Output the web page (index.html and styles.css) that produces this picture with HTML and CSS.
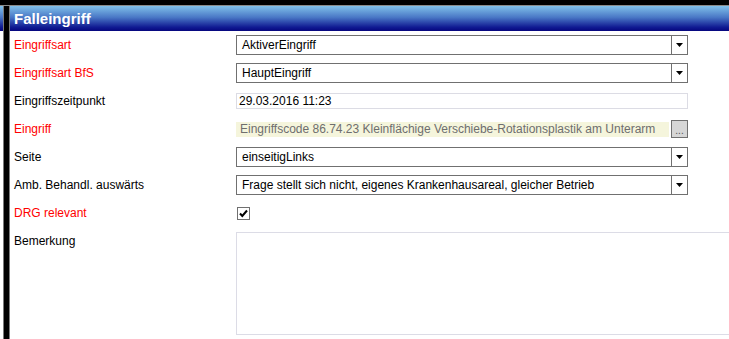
FILE: index.html
```html
<!DOCTYPE html>
<html lang="de">
<head>
  <meta charset="UTF-8">
  <title>Falleingriff</title>
  <link rel="stylesheet" href="styles.css">
</head>
<body>
<div class="topbar"></div>
<div class="layout">
  <div class="side">
    <div class="side-head"></div>
  </div>
  <div class="rule"></div>
  <div class="panel">
    <div class="panel-head">Falleingriff</div>
    <div class="form">
      <div class="row">
        <div class="label required">Eingriffsart</div>
        <div class="select">
          <span class="select-text">AktiverEingriff</span>
          <span class="select-arrow"><svg width="7" height="4" viewBox="0 0 7 4"><polygon points="0,0 7,0 3.5,4" fill="#000"/></svg></span>
        </div>
      </div>
      <div class="row">
        <div class="label required">Eingriffsart BfS</div>
        <div class="select">
          <span class="select-text">HauptEingriff</span>
          <span class="select-arrow"><svg width="7" height="4" viewBox="0 0 7 4"><polygon points="0,0 7,0 3.5,4" fill="#000"/></svg></span>
        </div>
      </div>
      <div class="row">
        <div class="label">Eingriffszeitpunkt</div>
        <div class="input">29.03.2016 11:23</div>
      </div>
      <div class="row">
        <div class="label required">Eingriff</div>
        <div class="lookup">
          <div class="lookup-text">Eingriffscode 86.74.23 Kleinflächige Verschiebe-Rotationsplastik am Unterarm</div>
          <button class="lookup-btn" type="button">...</button>
        </div>
      </div>
      <div class="row">
        <div class="label">Seite</div>
        <div class="select">
          <span class="select-text">einseitigLinks</span>
          <span class="select-arrow"><svg width="7" height="4" viewBox="0 0 7 4"><polygon points="0,0 7,0 3.5,4" fill="#000"/></svg></span>
        </div>
      </div>
      <div class="row">
        <div class="label">Amb. Behandl. auswärts</div>
        <div class="select">
          <span class="select-text">Frage stellt sich nicht, eigenes Krankenhausareal, gleicher Betrieb</span>
          <span class="select-arrow"><svg width="7" height="4" viewBox="0 0 7 4"><polygon points="0,0 7,0 3.5,4" fill="#000"/></svg></span>
        </div>
      </div>
      <div class="row">
        <div class="label required">DRG relevant</div>
        <div class="checkbox">
          <svg width="11" height="11" viewBox="0 0 11 11"><path d="M2 5.5 L4.3 8 L9 2.5" fill="none" stroke="#000" stroke-width="2"/></svg>
        </div>
      </div>
      <div class="row row-top">
        <div class="label">Bemerkung</div>
        <div class="textarea"></div>
      </div>
    </div>
  </div>
</div>
</body>
</html>
```

FILE: styles.css
```css
* {
  margin: 0;
  padding: 0;
  box-sizing: border-box;
}

body {
  font-family: 'Liberation Sans', Arial, sans-serif;
  font-size: 12px;
  color: #000;
  background: white;
  overflow: hidden;
}

.topbar {
  height: 6px;
  background: #000;
  border-bottom: 1px solid #8a8a8a;
}

.layout {
  display: flex;
  height: 333px;
}

.side {
  width: 3px;
}

.side-head,
.panel-head {
  height: 25px;
  background: linear-gradient(to bottom, #80c0ea 0%, #4a78c6 45%, #101a92 85%, #06067e 100%);
}

.rule {
  width: 7px;
  background: #000;
  border-left: 1px solid #7a7a7a;
  border-right: 1px solid #7a7a7a;
}

.panel {
  flex: 1;
  overflow: hidden;
}

.panel-head {
  padding-left: 4px;
  color: white;
  font-size: 15px;
  font-weight: bold;
  line-height: 25px;
}

.form {
  padding-left: 4px;
}

.row {
  display: flex;
  align-items: center;
  height: 28px;
}

.row-top {
  align-items: flex-start;
  height: auto;
}

.label {
  width: 222px;
  flex-shrink: 0;
  line-height: 28px;
}

.required {
  color: #f00;
}

.select {
  display: flex;
  width: 452px;
  height: 20px;
  border: 1px solid #707070;
  background: white;
}

.select-text {
  flex: 1;
  padding-left: 5px;
  line-height: 18px;
  white-space: nowrap;
  overflow: hidden;
}

.select-arrow {
  width: 16px;
  border-left: 1px solid #707070;
  display: flex;
  align-items: center;
  justify-content: center;
}

.input {
  width: 452px;
  height: 16px;
  border: 1px solid #dcdce4;
  padding-left: 2px;
  line-height: 14px;
}

.lookup {
  display: flex;
  align-items: center;
  gap: 2px;
  width: 452px;
}

.lookup-text {
  flex: 1;
  height: 15px;
  background: #f5f5dc;
  color: #6e6e6e;
  padding-left: 4px;
  line-height: 15px;
  white-space: nowrap;
  overflow: hidden;
}

.lookup-btn {
  width: 17px;
  height: 18px;
  background: #d6d6d6;
  border: 1px solid #707070;
  font-family: 'Liberation Sans', Arial, sans-serif;
  font-size: 10px;
  line-height: 20px;
  color: #555;
}

.checkbox {
  width: 13px;
  height: 13px;
  margin-left: 1px;
  border: 1px solid #707070;
  background: white;
  display: flex;
  align-items: center;
  justify-content: center;
}

.textarea {
  margin-top: 5px;
  width: 520px;
  height: 103px;
  flex-shrink: 0;
  border: 1px solid #dcdce6;
}
```
